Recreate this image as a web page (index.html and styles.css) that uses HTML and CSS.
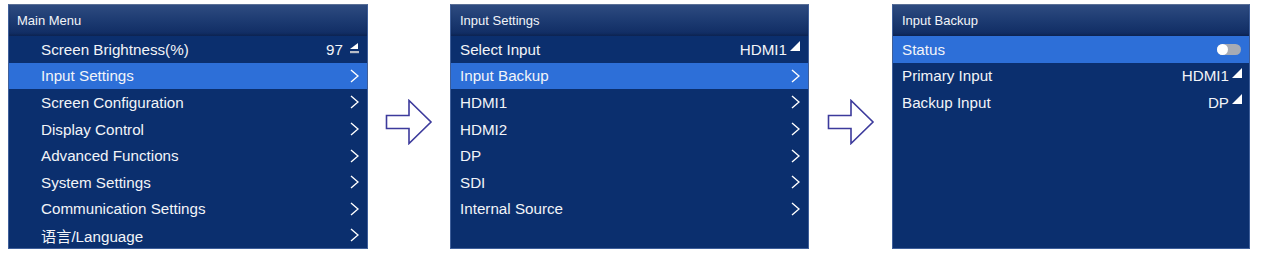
FILE: index.html
```html
<!DOCTYPE html>
<html>
<head>
<meta charset="utf-8">
<link rel="stylesheet" href="styles.css">
</head>
<body>
<div class="stage">
  <div class="panel p1">
    <div class="header">Main Menu</div>
    <div class="row"><span>Screen Brightness(%)</span><span class="val">97<svg class="edit" width="10" height="13" viewBox="0 0 10 13"><polygon points="1,8 9,2 9,8" fill="#fff"/><rect x="1" y="10" width="9" height="2.2" fill="#b9bdc6"/></svg></span></div>
    <div class="row sel"><span>Input Settings</span><svg class="chev" width="9" height="14" viewBox="0 0 9 14"><polyline points="1,1 8,7 1,13" fill="none" stroke="#fff" stroke-width="1.4"/></svg></div>
    <div class="row"><span>Screen Configuration</span><svg class="chev" width="9" height="14" viewBox="0 0 9 14"><polyline points="1,1 8,7 1,13" fill="none" stroke="#fff" stroke-width="1.4"/></svg></div>
    <div class="row"><span>Display Control</span><svg class="chev" width="9" height="14" viewBox="0 0 9 14"><polyline points="1,1 8,7 1,13" fill="none" stroke="#fff" stroke-width="1.4"/></svg></div>
    <div class="row"><span>Advanced Functions</span><svg class="chev" width="9" height="14" viewBox="0 0 9 14"><polyline points="1,1 8,7 1,13" fill="none" stroke="#fff" stroke-width="1.4"/></svg></div>
    <div class="row"><span>System Settings</span><svg class="chev" width="9" height="14" viewBox="0 0 9 14"><polyline points="1,1 8,7 1,13" fill="none" stroke="#fff" stroke-width="1.4"/></svg></div>
    <div class="row"><span>Communication Settings</span><svg class="chev" width="9" height="14" viewBox="0 0 9 14"><polyline points="1,1 8,7 1,13" fill="none" stroke="#fff" stroke-width="1.4"/></svg></div>
    <div class="row"><span>语言/Language</span><svg class="chev" width="9" height="14" viewBox="0 0 9 14"><polyline points="1,1 8,7 1,13" fill="none" stroke="#fff" stroke-width="1.4"/></svg></div>
  </div>
  <div class="gap">
    <svg class="arrow" width="48" height="46" viewBox="0 0 48 46"><polygon points="1.5,16.5 24,16.5 24,1.5 46,23 24,44.5 24,29.5 1.5,29.5" fill="#fff" stroke="#3c3a9c" stroke-width="1.6" stroke-linejoin="miter"/></svg>
  </div>
  <div class="panel p2">
    <div class="header">Input Settings</div>
    <div class="row"><span>Select Input</span><span class="val">HDMI1<svg class="tri" width="10" height="10" viewBox="0 0 10 10"><polygon points="0,10 10,0 10,10" fill="#fff"/></svg></span></div>
    <div class="row sel"><span>Input Backup</span><svg class="chev" width="9" height="14" viewBox="0 0 9 14"><polyline points="1,1 8,7 1,13" fill="none" stroke="#fff" stroke-width="1.4"/></svg></div>
    <div class="row"><span>HDMI1</span><svg class="chev" width="9" height="14" viewBox="0 0 9 14"><polyline points="1,1 8,7 1,13" fill="none" stroke="#fff" stroke-width="1.4"/></svg></div>
    <div class="row"><span>HDMI2</span><svg class="chev" width="9" height="14" viewBox="0 0 9 14"><polyline points="1,1 8,7 1,13" fill="none" stroke="#fff" stroke-width="1.4"/></svg></div>
    <div class="row"><span>DP</span><svg class="chev" width="9" height="14" viewBox="0 0 9 14"><polyline points="1,1 8,7 1,13" fill="none" stroke="#fff" stroke-width="1.4"/></svg></div>
    <div class="row"><span>SDI</span><svg class="chev" width="9" height="14" viewBox="0 0 9 14"><polyline points="1,1 8,7 1,13" fill="none" stroke="#fff" stroke-width="1.4"/></svg></div>
    <div class="row"><span>Internal Source</span><svg class="chev" width="9" height="14" viewBox="0 0 9 14"><polyline points="1,1 8,7 1,13" fill="none" stroke="#fff" stroke-width="1.4"/></svg></div>
  </div>
  <div class="gap">
    <svg class="arrow" width="48" height="46" viewBox="0 0 48 46"><polygon points="1.5,16.5 24,16.5 24,1.5 46,23 24,44.5 24,29.5 1.5,29.5" fill="#fff" stroke="#3c3a9c" stroke-width="1.6" stroke-linejoin="miter"/></svg>
  </div>
  <div class="panel p3">
    <div class="header">Input Backup</div>
    <div class="row sel"><span>Status</span><span class="toggle"><span class="knob"></span></span></div>
    <div class="row"><span>Primary Input</span><span class="val">HDMI1<svg class="tri" width="10" height="10" viewBox="0 0 10 10"><polygon points="0,10 10,0 10,10" fill="#fff"/></svg></span></div>
    <div class="row"><span>Backup Input</span><span class="val">DP<svg class="tri" width="10" height="10" viewBox="0 0 10 10"><polygon points="0,10 10,0 10,10" fill="#fff"/></svg></span></div>
  </div>
</div>
</body>
</html>
```

FILE: styles.css
```css
html, body {
  margin: 0;
  padding: 0;
  background: #ffffff;
}
body {
  width: 1266px;
  height: 265px;
  overflow: hidden;
  font-family: "Liberation Sans", Arial, "Noto Sans CJK SC", sans-serif;
}
.stage {
  display: flex;
  align-items: flex-start;
  padding: 4px 0 0 8px;
}
.panel {
  background: #0b2f6e;
  height: 245px;
  box-sizing: border-box;
  border: 1px solid #3f5f9a;
  border-top-color: #5a6f96;
  display: flex;
  flex-direction: column;
  color: #f2f4f8;
}
.p1 { width: 360px; }
.p2 { width: 359px; }
.p3 { width: 358px; }
.gap {
  display: flex;
  justify-content: center;
  padding-top: 95px;
}
.stage > .gap:nth-child(2) { width: 82px; }
.stage > .gap:nth-child(4) { width: 83px; }
.header {
  height: 31px;
  flex: none;
  box-sizing: border-box;
  display: flex;
  align-items: center;
  font-size: 13px;
  padding-left: 8px;
  background: linear-gradient(#2e4b80 0%, #1b3970 55%, #0f2b62 100%);
  box-shadow: inset 0 -2px 2px rgba(0,0,0,0.15);
}
.p2 .header, .p3 .header { padding-left: 9px; }
.row {
  height: 26.6px;
  flex: none;
  display: flex;
  align-items: center;
  justify-content: space-between;
  font-size: 15.2px;
  padding: 0 8px 0 9px;
}
.p1 .row { padding-left: 32px; }
.p3 .row { padding-right: 7px; }
.row.sel {
  background: #2d6fd8;
}
.val {
  display: flex;
  align-items: center;
  gap: 3px;
}
.edit { margin-top: -3px; margin-left: 3px; }
.tri { margin-top: -6px; }
.toggle {
  width: 24px;
  height: 11px;
  border-radius: 6px;
  background: #a7abb4;
  display: flex;
  align-items: center;
  margin-right: 1px;
}
.knob {
  width: 11px;
  height: 11px;
  border-radius: 50%;
  background: #ffffff;
}
.arrow { display: block; }
```
